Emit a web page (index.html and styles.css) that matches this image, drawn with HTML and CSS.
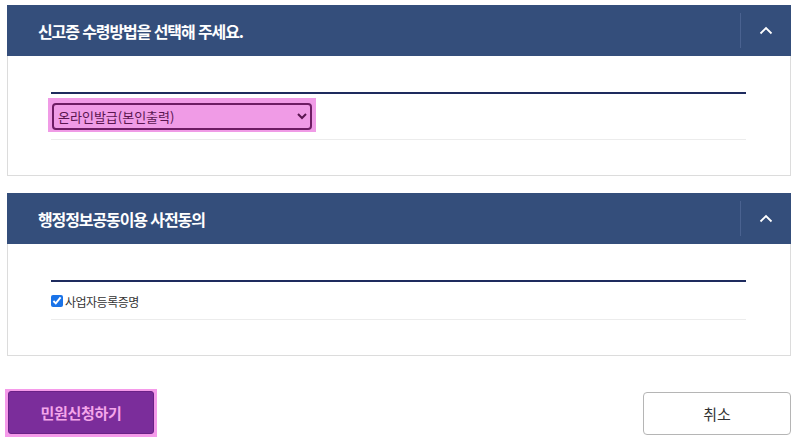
FILE: index.html
```html
<!DOCTYPE html>
<html lang="ko">
<head>
  <meta charset="UTF-8">
  <title>신고증 수령방법</title>
  <link rel="stylesheet" href="styles.css">
</head>
<body>
  <div class="page">
    <section class="panel">
      <div class="panel-head">
        <h2>신고증 수령방법을 선택해 주세요.</h2>
        <button class="toggle" aria-label="접기">
          <svg width="14" height="9" viewBox="0 0 14 9"><path d="M1.5 7.5 L7 2 L12.5 7.5" fill="none" stroke="#fff" stroke-width="1.8"/></svg>
        </button>
      </div>
      <div class="panel-body">
        <div class="row">
          <span class="focus-ring select-ring">
            <select class="method">
              <option>온라인발급(본인출력)</option>
              <option>우편수령</option>
              <option>방문수령</option>
            </select>
          </span>
        </div>
      </div>
    </section>

    <section class="panel">
      <div class="panel-head">
        <h2>행정정보공동이용 사전동의</h2>
        <button class="toggle" aria-label="접기">
          <svg width="14" height="9" viewBox="0 0 14 9"><path d="M1.5 7.5 L7 2 L12.5 7.5" fill="none" stroke="#fff" stroke-width="1.8"/></svg>
        </button>
      </div>
      <div class="panel-body">
        <div class="row check-row">
          <label><input type="checkbox" checked> 사업자등록증명</label>
        </div>
      </div>
    </section>

    <div class="actions">
      <span class="focus-ring submit-ring">
        <button class="btn-submit">민원신청하기</button>
      </span>
      <button class="btn-cancel">취소</button>
    </div>
  </div>
</body>
</html>
```

FILE: styles.css
```css
body {
  margin: 0;
  background: #fff;
  font-family: "Noto Sans CJK KR", "Noto Sans", sans-serif;
  color: #333;
}
.page {
  padding: 5px 9px 0 7px;
}
.panel {
  border: 1px solid #dcdcdc;
  border-top: none;
  margin-bottom: 17px;
}
.panel-head {
  background: #344e7b;
  height: 51px;
  display: flex;
  align-items: center;
  margin: 0 -1px;
}
.panel-head h2 {
  flex: 1;
  margin: 0;
  padding-left: 31px;
  color: #fff;
  font-size: 16px;
  font-weight: 700;
  letter-spacing: -1.1px;
}
.toggle {
  width: 51px;
  height: 35px;
  border: none;
  border-left: 1px solid #4a6290;
  background: none;
  display: flex;
  align-items: center;
  justify-content: center;
  padding: 0;
}
.panel-body {
  padding: 36px 44px 35px 43px;
}
.row {
  border-top: 2px solid #1e2b5e;
  border-bottom: 1px solid #ececec;
  height: 45px;
  display: flex;
  align-items: flex-start;
}
.focus-ring {
  display: inline-flex;
  background: #f09be6;
}
.select-ring {
  margin: 4px 0 0 -3px;
  padding: 5px 4px 2px;
}
.method {
  width: 260px;
  height: 27px;
  margin: 0;
  background: #f09be6;
  border: 2px solid #6d1c63;
  border-radius: 4px;
  outline: none;
  color: #5a1650;
  font-family: inherit;
  font-size: 13px;
  padding: 0;
}
.check-row {
  height: 36px;
  align-items: center;
  padding-top: 1px;
}
.check-row label {
  display: flex;
  align-items: center;
  font-size: 12px;
  letter-spacing: -0.5px;
  color: #333;
}
.check-row input {
  width: 12px;
  height: 12px;
  margin: 0 2px 0 0;
  accent-color: #1a73e8;
}
.actions {
  display: flex;
  justify-content: space-between;
  align-items: center;
  margin-top: 33px;
}
.submit-ring {
  margin-left: -2px;
  padding: 2px 3px 3px;
  background: #f59aea;
}
.btn-submit {
  width: 146px;
  height: 43px;
  background: #7b2d9b;
  color: #f4a6ea;
  border: 1px solid #6a2187;
  border-radius: 3px;
  font-family: inherit;
  font-size: 15px;
  font-weight: 700;
  letter-spacing: -0.3px;
}
.btn-cancel {
  width: 148px;
  height: 43px;
  margin-top: 1px;
  background: #fff;
  color: #333;
  border: 1px solid #b5b5b5;
  border-radius: 4px;
  font-family: inherit;
  font-size: 15px;
}
```
